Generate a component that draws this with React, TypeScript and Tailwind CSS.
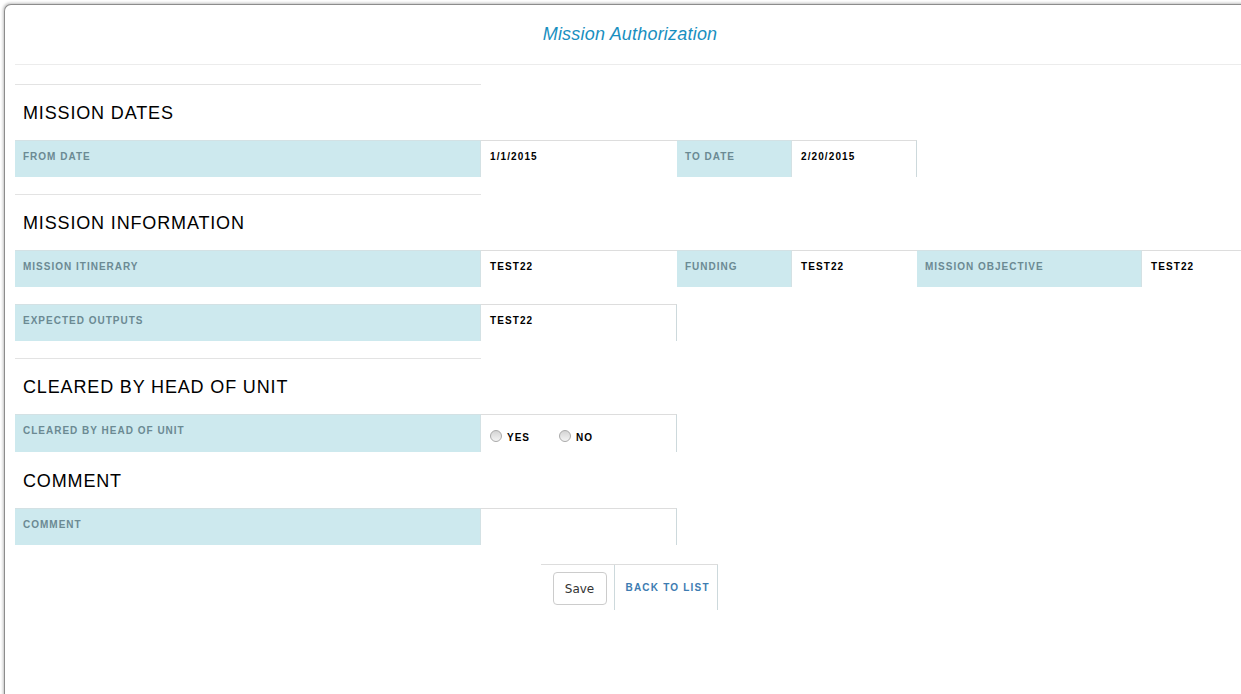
import type { ReactNode } from "react";

const font = { fontFamily: '"Liberation Sans", Arial, sans-serif' };

function Label(props: { className: string; children: ReactNode }) {
    return (
        <div className={"bg-[#cde9ee] border-t border-r border-[#d3e1e4] pl-2 pt-[10px] text-[10px] leading-[12px] font-bold tracking-[1px] text-[#6b8a93] " + props.className}>
            {props.children}
        </div>
    );
}

function Value(props: { className: string; children?: ReactNode }) {
    return (
        <div className={"border-t border-[#dddddd] pl-[9px] pt-[10px] text-[10px] leading-[12px] font-bold tracking-[1.1px] text-black " + props.className}>
            {props.children}
        </div>
    );
}

function Heading(props: { children: ReactNode }) {
    return (
        <div className="h-[55px] flex items-center pl-2 pt-[2px] text-[18px] tracking-[0.85px] text-black">
            {props.children}
        </div>
    );
}

function Line() {
    return <div className="w-[466px] h-px bg-[#e3e3e3]"></div>;
}

function Radio(props: { label: string }) {
    return (
        <div className="flex items-center gap-[5px]">
            <span className="w-[12px] h-[12px] rounded-full border border-[#a9a9a9] bg-gradient-to-b from-[#d4d4d4] to-[#f4f4f4]"></span>
            <span className="pt-[3px] text-[10px] font-bold tracking-[1px] text-black">{props.label}</span>
        </div>
    );
}

export default function App() {
    return (
        <div className="w-[1241px] h-[694px] overflow-hidden bg-white pl-[4px] pt-[4px]" style={font}>
            <div className="w-[1260px] h-[720px] border-l border-t border-[#8c8c8c] rounded-tl-[7px] shadow-[-1px_-1px_3px_rgba(0,0,0,0.25)] bg-white pl-[10px]">
                <div className="w-[1226px] h-[59px] border-b border-[#ececec] flex items-center justify-center pl-[2px] box-content">
                    <h1 className="text-[18px] italic tracking-[0.2px] text-[#1a8fc0]">Mission Authorization</h1>
                </div>

                <div className="mt-[19px]">
                    <Line />
                    <Heading>MISSION DATES</Heading>
                    <div className="flex h-[37px]">
                        <Label className="w-[466px]">FROM DATE</Label>
                        <Value className="w-[196px]">1/1/2015</Value>
                        <Label className="w-[115px]">TO DATE</Label>
                        <Value className="w-[125px] border-r border-r-[#cdd9dc]">2/20/2015</Value>
                    </div>

                    <div className="mt-[17px]">
                        <Line />
                    </div>
                    <Heading>MISSION INFORMATION</Heading>
                    <div className="flex h-[37px]">
                        <Label className="w-[466px]">MISSION ITINERARY</Label>
                        <Value className="w-[196px]">TEST22</Value>
                        <Label className="w-[115px]">FUNDING</Label>
                        <Value className="w-[125px]">TEST22</Value>
                        <Label className="w-[225px]">MISSION OBJECTIVE</Label>
                        <Value className="w-[120px]">TEST22</Value>
                    </div>
                    <div className="flex h-[37px] mt-[17px]">
                        <Label className="w-[466px]">EXPECTED OUTPUTS</Label>
                        <Value className="w-[196px] border-r border-r-[#cdd9dc]">TEST22</Value>
                    </div>

                    <div className="mt-[17px]">
                        <Line />
                    </div>
                    <Heading>CLEARED BY HEAD OF UNIT</Heading>
                    <div className="flex h-[38px]">
                        <Label className="w-[466px]">CLEARED BY HEAD OF UNIT</Label>
                        <div className="w-[196px] border-t border-r border-[#dddddd] border-r-[#cdd9dc] pl-[9px] pt-[12px] flex gap-[29px] items-start">
                            <Radio label="YES" />
                            <Radio label="NO" />
                        </div>
                    </div>

                    <div className="h-[56px] flex items-center pl-2 pt-[2px] text-[18px] tracking-[0.85px] text-black">COMMENT</div>
                    <div className="flex h-[37px]">
                        <Label className="w-[466px]">COMMENT</Label>
                        <Value className="w-[196px] border-r border-r-[#cdd9dc]"></Value>
                    </div>

                    <div className="w-[1228px] flex justify-center mt-[19px]">
                        <div className="flex h-[46px] border-t border-[#dddddd]">
                            <div className="w-[74px] border-r border-[#cdd9dc] pl-[12px] pt-[7px]">
                                <button className="w-[54px] h-[33px] border border-[#cccccc] rounded-[4px] bg-white text-[12px] text-[#333]" style={{ fontFamily: '"DejaVu Sans", sans-serif' }}>Save</button>
                            </div>
                            <div className="w-[103px] border-r border-[#cdd9dc] pl-[11px] pt-[17px] text-[10px] leading-[12px] font-bold tracking-[1.2px] text-[#3d7cb2]">
                                BACK TO LIST
                            </div>
                        </div>
                    </div>
                </div>
            </div>
        </div>
    );
}
